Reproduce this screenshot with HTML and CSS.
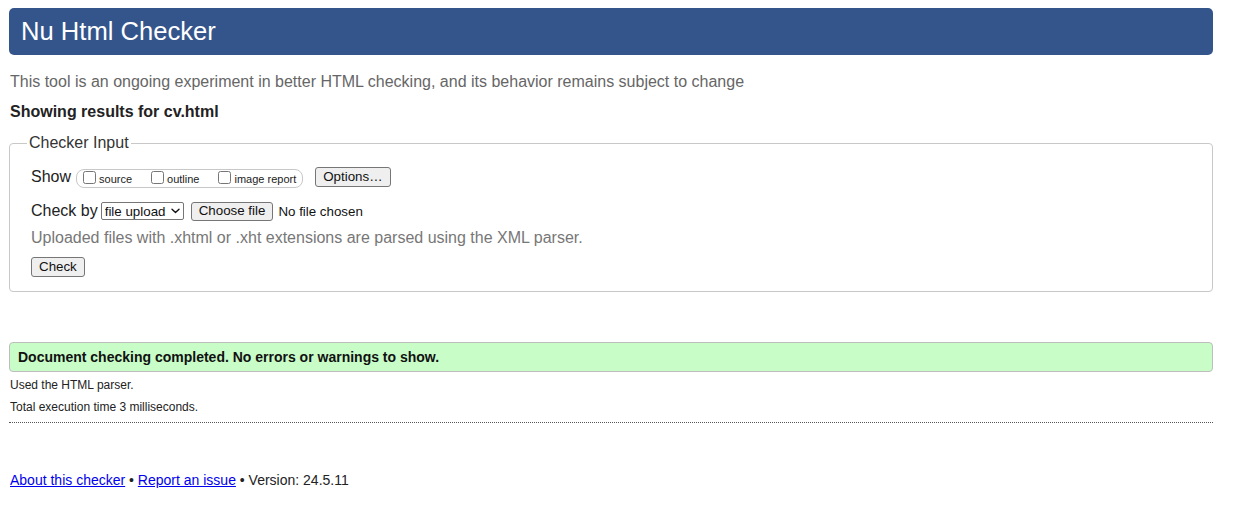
FILE: index.html
```html
<!DOCTYPE html>
<html lang="en">
<head>
<meta charset="utf-8">
<title>Showing results for cv.html - Nu Html Checker</title>
<link rel="stylesheet" href="styles.css">
</head>
<body>
<h1 class="banner">Nu Html Checker</h1>
<p class="intro">This tool is an ongoing experiment in better HTML checking, and its behavior remains subject to change</p>
<p class="showing">Showing results for cv.html</p>

<fieldset class="checker">
  <legend class="checker-legend">Checker Input</legend>
  <div class="row row-show">
    <span class="row-label">Show</span>
    <fieldset class="pill">
      <label class="opt"><input type="checkbox" class="cb">source</label>
      <label class="opt"><input type="checkbox" class="cb">outline</label>
      <label class="opt"><input type="checkbox" class="cb">image report</label>
    </fieldset>
    <button type="button" class="btn btn-options">Options…</button>
  </div>
  <div class="row row-checkby">
    <span class="row-label">Check by</span>
    <span class="select-wrap">
      <select class="select"><option>file upload</option></select>
      <svg class="chev" width="9" height="6" viewBox="0 0 9 6"><path d="M1 1.2 L4.5 4.6 L8 1.2" fill="none" stroke="#111" stroke-width="1.4" stroke-linecap="round" stroke-linejoin="round"/></svg>
    </span>
    <button type="button" class="btn btn-file">Choose file</button>
    <span class="nofile">No file chosen</span>
  </div>
  <p class="hint">Uploaded files with .xhtml or .xht extensions are parsed using the XML parser.</p>
  <div class="row row-submit">
    <button type="button" class="btn btn-check">Check</button>
  </div>
</fieldset>

<div class="success"><p class="success-text">Document checking completed. No errors or warnings to show.</p></div>
<p class="details">Used the HTML parser.</p>
<p class="details details-last">Total execution time 3 milliseconds.</p>

<p class="footer"><a href="#">About this checker</a> • <a href="#">Report an issue</a> • Version: 24.5.11</p>
</body>
</html>
```

FILE: styles.css
```css
html { background: #fff; }
body {
  margin: 8px 25px 0 9px;
  font-family: "Liberation Sans", Arial, Helvetica, sans-serif;
  color: #222;
}

.banner {
  margin: 0;
  height: 47px;
  line-height: 47px;
  padding-left: 12px;
  background: #34558b;
  color: #fff;
  font-size: 25.6px;
  font-weight: normal;
  border-radius: 5px;
}

.intro {
  margin: 18px 0 0 1px;
  font-size: 16px;
  line-height: 18px;
  color: #666;
}

.showing {
  margin: 12px 0 0 1px;
  font-size: 16px;
  line-height: 18px;
  font-weight: bold;
  color: #222;
}

.checker {
  margin: 13px 0 0 0;
  padding: 0 20px 14px 21px;
  border: 1px solid #c8c8c8;
  border-radius: 4px;
  min-width: 0;
}

.checker-legend {
  margin-left: -4px;
  padding: 0 2px;
  font-size: 16px;
  line-height: 18px;
  color: #333;
}

.row {
  display: flex;
  align-items: center;
}

.row-label {
  font-size: 16px;
  line-height: 18px;
  color: #222;
}

.row-show {
  margin-top: 14px;
  height: 22px;
}

.pill {
  display: flex;
  align-items: flex-start;
  gap: 19px;
  margin: 2px 0 0 5px;
  padding: 1px 6px 2px 6px;
  height: 19px;
  box-sizing: border-box;
  border: 1px solid #c8c8c8;
  border-radius: 8px;
  min-width: 0;
}

.opt {
  display: flex;
  align-items: flex-end;
  font-size: 11px;
  line-height: 13px;
  color: #222;
  padding-top: 2px;
}

.cb {
  width: 13px;
  height: 13px;
  margin: -2px 3px 0 0;
  align-self: flex-start;
}

.btn {
  font-family: "Liberation Sans", Arial, Helvetica, sans-serif;
  font-size: 13.33px;
  line-height: 16px;
  color: #111;
  background: #efefef;
  border: 1px solid #767676;
  border-radius: 3px;
  padding: 1px 6px;
  margin: 0;
}

.btn-options {
  margin-left: 12px;
  padding: 1px 7px;
  height: 20px;
}

.row-checkby {
  margin-top: 12px;
  height: 22px;
}

.select-wrap {
  position: relative;
  display: inline-flex;
  margin-left: 3px;
}

.select {
  appearance: none;
  -webkit-appearance: none;
  font-family: "Liberation Sans", Arial, Helvetica, sans-serif;
  font-size: 13.33px;
  line-height: 15px;
  color: #111;
  background: #fff;
  border: 1px solid #767676;
  border-radius: 2px;
  width: 83px;
  height: 18px;
  padding: 0 0 0 3px;
  margin: 0;
}

.chev {
  position: absolute;
  right: 4px;
  top: 6px;
}

.btn-file {
  margin-left: 7px;
  height: 19px;
  padding: 0 7px;
}

.nofile {
  margin-left: 5px;
  font-size: 13.33px;
  color: #111;
}

.hint {
  margin: 7px 0 0 0;
  font-size: 16px;
  line-height: 18px;
  color: #777;
}

.row-submit {
  margin-top: 10px;
}

.btn-check {
  height: 20px;
  padding: 0 7px;
}

.success {
  margin-top: 50px;
  height: 30px;
  box-sizing: border-box;
  padding: 0 8px;
  display: flex;
  align-items: center;
  background: #c8fdc8;
  border: 1px solid #bdbdbd;
  border-radius: 4px;
}

.success-text {
  margin: 0;
  font-size: 14px;
  font-weight: bold;
  color: #111;
}

.details {
  margin: 6px 0 0 1px;
  font-size: 12px;
  line-height: 14px;
  color: #222;
}

.details-last {
  margin-top: 8px;
  padding-bottom: 8px;
  border-bottom: 1px dotted #555;
  margin-left: 0;
  padding-left: 1px;
}

.footer {
  margin: 49px 0 0 1px;
  font-size: 14px;
  line-height: 16px;
  color: #222;
}

.footer a {
  color: #0000ee;
  text-decoration: underline;
}
```
